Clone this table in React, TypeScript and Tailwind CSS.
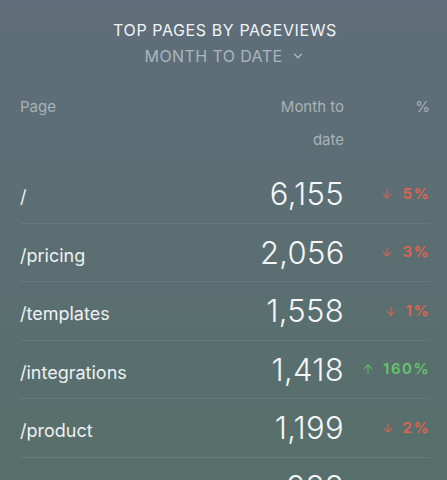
import { ArrowDown, ArrowUp, ChevronDown } from "lucide-react";

// Top pages widget: static rows, change is percent vs previous period.
interface PageRow {
  path: string;
  views: string;
  change: number;
}

const rows: PageRow[] = [
  { path: "/", views: "6,155", change: -5 },
  { path: "/pricing", views: "2,056", change: -3 },
  { path: "/templates", views: "1,558", change: -1 },
  { path: "/integrations", views: "1,418", change: 160 },
  { path: "/product", views: "1,199", change: -2 },
  { path: "/blog", views: "988", change: -4 },
];

function Change({ value }: { value: number }) {
  const up = value > 0;
  return (
    <span
      className={`flex items-center justify-end gap-[8px] text-[15px] font-semibold tracking-[1.5px] ${
        up ? "text-[#62c66b]" : "text-[#e2624e]"
      }`}
    >
      {up ? (
        <ArrowUp size={14} strokeWidth={1.75} />
      ) : (
        <ArrowDown size={14} strokeWidth={1.75} />
      )}
      <span>{Math.abs(value)}%</span>
    </span>
  );
}

export default function App() {
  return (
    <div
      className="h-[480px] w-[447px] overflow-hidden bg-gradient-to-b from-[#5f6e7a] to-[#576f6a] pl-5 pr-[17px] pt-5 text-white"
      style={{ fontFamily: "Inter, 'Noto Sans', sans-serif" }}
    >
      <div className="text-center text-[16px] leading-5 tracking-[0.6px] text-[#f1f4f5]">
        TOP PAGES BY PAGEVIEWS
      </div>
      <div className="mt-[6px] flex items-center justify-center gap-[9px] text-[16px] leading-5 tracking-[0.4px] text-[#aab6bc]">
        MONTH TO DATE
        <ChevronDown size={14} strokeWidth={2.5} />
      </div>

      <div className="mt-[24px] grid grid-cols-[1fr_84px_86px] text-[15px] leading-[33px] text-[#a7b3b8]">
        <span>Page</span>
        <span className="text-right">Month to date</span>
        <span className="text-right">%</span>
      </div>

      <div className="mt-[9px]">
        {rows.map((row) => (
          <div
            key={row.path}
            className="box-content grid h-[57.5px] grid-cols-[1fr_84px_86px] items-center border-b border-white/[0.08]"
          >
            <span className="pt-[6px] text-[18px] text-[#eef1f2]">{row.path}</span>
            <span className="text-right text-[31px] font-light leading-none tracking-[0.3px] text-[#f4f6f7]">
              {row.views}
            </span>
            <Change value={row.change} />
          </div>
        ))}
      </div>
    </div>
  );
}
